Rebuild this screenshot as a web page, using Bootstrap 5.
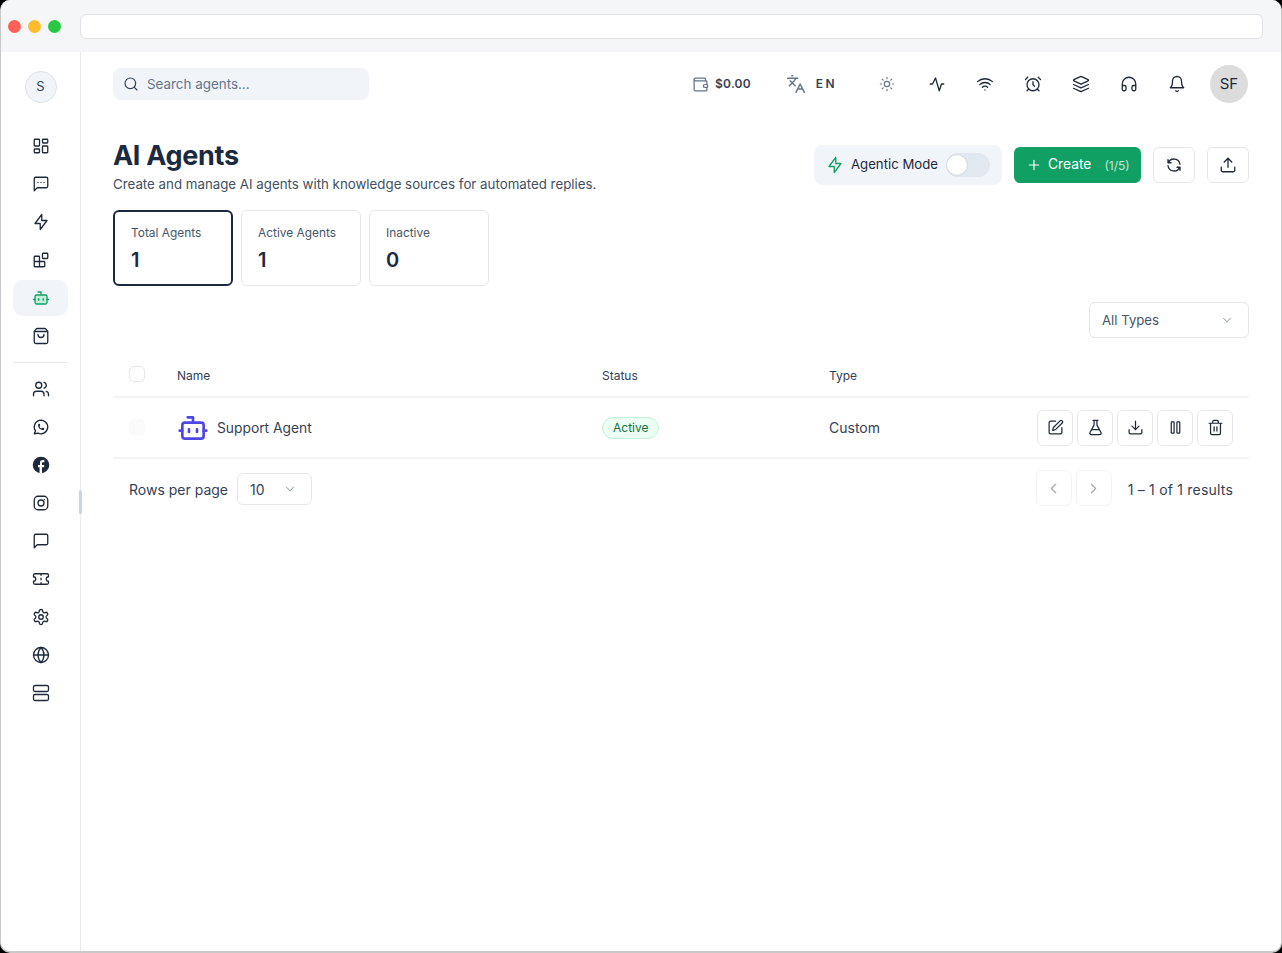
<!DOCTYPE html>
<html lang="en">
<head>
  <meta charset="UTF-8">
  <meta name="viewport" content="width=device-width, initial-scale=1">
  <title>AI Agents</title>
  <link href="https://cdn.jsdelivr.net/npm/bootstrap@5.3.0/dist/css/bootstrap.min.css" rel="stylesheet">
  <style>
    html, body { height: 100%; }
    body { background: #000; overflow: hidden; font-family: Inter, "Liberation Sans", sans-serif; color: #1e293b; }
    .ico { width: 18px; height: 18px; fill: none; stroke: currentColor; stroke-width: 1.75; stroke-linecap: round; stroke-linejoin: round; flex: none; }
    .app-window { height: 953px; background: #fff; border-radius: 10px; overflow: hidden; border: solid #c9c9c9; border-width: 0 1px 2px 1px; }
    .chrome-bar { height: 52px; background: #f5f6f8; margin: 0 -1px; padding: 14px 19px 13px 8px; gap: 8px; }
    .dot { width: 13px; height: 13px; border-radius: 50%; margin-left: -1px; }
    .dot-r { background: #fe5f57; margin-left: 0; }
    .dot-y { background: #febc2e; }
    .dot-g { background: #28c840; }
    .url-box { flex: 1; height: 25px; background: #fff; border: 1px solid #dfe2e6; border-radius: 6px; margin-left: 11px; }
    .side-rail { width: 80px; flex: none; border-right: 1px solid #e9ebee; padding: 19px 12px 0; position: relative; }
    .org-chip { width: 32px; height: 32px; border-radius: 50%; background: #f1f5f9; border: 1px solid #dde3ea; font-size: 13px; color: #334155; margin: 0 auto 25px; }
    .rail-item { height: 36px; margin-bottom: 2px; border-radius: 10px; color: #1e293b; }
    .rail-item.is-on { background: #f1f5f9; color: #10a064; }
    .rail-sep { border-top: 1px solid #e5e7eb; margin: 8px 0 8px; }
    .rail-grip { position: absolute; right: -2px; top: 438px; width: 3px; height: 24px; background: #cbd5e1; border-radius: 2px; }
    .main-pane { padding: 0 32px; min-width: 0; }
    .top-strip { height: 64px; }
    .search-box { width: 256px; height: 32px; background: #f1f5f9; border-radius: 8px; padding: 0 10px; gap: 8px; font-size: 13.4px; color: #64748b; }
    .search-box .ico { width: 16px; height: 16px; color: #334155; }
    .wallet-ico { width: 17px; height: 17px; margin-right: 6px; }
    .wallet-text { font-size: 12px; font-weight: 600; color: #334155; letter-spacing: .2px; }
    .lang-ico { width: 20px; height: 20px; margin-left: 35px; }
    .lang-text { font-size: 12px; font-weight: 600; color: #334155; letter-spacing: 2.4px; margin-left: 10px; }
    .top-slot { width: 48px; color: #1e293b; }
    .sun-slot { margin-left: 26px; margin-right: 2px; }
    .sun-slot .ico { width: 16px; height: 16px; }
    .muted-ico { color: #64748b; }
    .user-chip { width: 38px; height: 38px; border-radius: 50%; background: #dcdcdc; font-size: 15px; color: #1e293b; margin-left: 9px; margin-right: 1px; }
    .page-title { font-size: 27px; line-height: 30px; font-weight: 700; color: #1b2a41; letter-spacing: -.3px; margin: 1px 0 3px; }
    .page-sub { font-size: 13.3px; line-height: 20px; color: #434f60; margin: 0; }
    .head-actions { margin-top: 5px; gap: 12px; }
    .agentic-box { height: 40px; width: 188px; background: #f1f5f9; border-radius: 8px; padding: 0 12px; gap: 7px; font-size: 13.2px; color: #1e293b; white-space: nowrap; }
    .toggle-track { width: 44px; height: 24px; background: #e2e8f0; border-radius: 12px; position: relative; margin-left: auto; }
    .toggle-track::after { content: ""; position: absolute; left: 1px; top: 2px; width: 20px; height: 20px; border-radius: 50%; background: #fff; box-shadow: 0 0 2px rgba(0,0,0,.2); }
    .green-ico { color: #10a064; }
    .create-btn { width: 127px; height: 36px; background: #10a064; color: #fff; border: 0; border-radius: 6px; font-size: 13.8px; padding: 0 12px 1px; gap: 6px; }
    .create-btn:hover { background: #10a064; color: #fff; }
    .create-btn .ico { width: 16px; height: 16px; }
    .create-btn .count { font-size: 12px; margin-left: 7px; padding-top: 2px; opacity: .75; }
    .square-btn { width: 42px; height: 36px; padding: 0; background: #fff; border: 1px solid #e5e7eb; border-radius: 6px; color: #1e293b; }
    .square-btn .big-ico { width: 18px; height: 18px; }
    .stat-tile { width: 120px; height: 76px; border: 1px solid #e5e7eb; border-radius: 6px; padding: 14px 16px; }
    .stat-tile.is-on { border: 2px solid #1b2a41; padding: 13px 16px; }
    .stat-label { font-size: 11.9px; line-height: 16px; color: #475569; }
    .stat-num { font-size: 20px; line-height: 26px; font-weight: 600; color: #1b2a41; margin-top: 6px; }
    .pick-btn { height: 36px; border: 1px solid #e5e7eb; border-radius: 6px; background: #fff; font-size: 13.2px; color: #475569; padding: 0 14px 0 12px; }
    .pick-btn .ico { width: 14px; height: 14px; color: #94a3b8; }
    .pick-label { padding-top: 2px; }
    .pick-types { width: 160px; }
    .pick-rows { width: 75px; height: 32px; font-size: 14px; color: #334155; }
    .agent-grid { margin: 16px 0 0; table-layout: fixed; width: 100%; }
    .agent-grid th { font-size: 12px; font-weight: 400; color: #334155; height: 43px; padding: 2px 0 0 16px; border-bottom: 2px solid #f3f4f6; }
    .agent-grid td { height: 61px; padding: 0 0 0 16px; font-size: 14px; color: #334155; border-bottom: 2px solid #f3f4f6; }
    .tick-box { width: 16px; height: 16px; border: 1px solid #e5e7eb; border-radius: 5px; background: #fff; margin-top: -4px; }
    .tick-box.faint { border-color: #f8f9fa; background: #fbfbfc; margin-top: -2px; }
    .name-cell { font-size: 13.8px; }
    .name-text { padding-top: 2px; }
    .bot-mark { width: 32px; height: 32px; color: #4f46e5; stroke-width: 2; }
    .state-pill { font-size: 12px; line-height: 20px; padding: 0 10px; border-radius: 11px; background: #ecfdf3; border: 1px solid #c7f0d8; color: #166f3f; }
    .act-btn { width: 36px; height: 36px; padding: 0; background: #fff; border: 1px solid #e5e7eb; border-radius: 6px; color: #1e293b; }
    .act-btn .ico { width: 17px; height: 17px; }
    .off-btn { border-color: #f3f4f6; color: #a3abb6; }
    .foot-strip { padding: 11px 16px 0; font-size: 14px; color: #334155; }
    .rows-group { margin-top: 2px; gap: 9px; }
    .range-text { margin-left: 12px; padding-top: 3px; letter-spacing: .2px; }
  </style>
</head>
<body>
  <!-- icon sprite -->
  <svg width="0" height="0" class="position-absolute">
    <symbol id="i-dash" viewBox="0 0 24 24"><rect x="3" y="3" width="7" height="9" rx="1"/><rect x="14" y="3" width="7" height="5" rx="1"/><rect x="14" y="12" width="7" height="9" rx="1"/><rect x="3" y="16" width="7" height="5" rx="1"/></symbol>
    <symbol id="i-chat" viewBox="0 0 24 24"><path d="M21 15a2 2 0 0 1-2 2H7l-4 4V5a2 2 0 0 1 2-2h14a2 2 0 0 1 2 2z"/><path d="M8 10h.01M12 10h.01M16 10h.01"/></symbol>
    <symbol id="i-msg" viewBox="0 0 24 24"><path d="M21 15a2 2 0 0 1-2 2H7l-4 4V5a2 2 0 0 1 2-2h14a2 2 0 0 1 2 2z"/></symbol>
    <symbol id="i-bolt" viewBox="0 0 24 24"><path d="M13 2v8h7l-9 12v-8H4l9-12"/></symbol>
    <symbol id="i-blocks" viewBox="0 0 24 24"><rect x="14" y="3" width="7" height="7" rx="1"/><path d="M10 21V8a1 1 0 0 0-1-1H4a1 1 0 0 0-1 1v12a1 1 0 0 0 1 1h12a1 1 0 0 0 1-1v-5a1 1 0 0 0-1-1H3"/></symbol>
    <symbol id="i-bot" viewBox="0 0 24 24"><path d="M12 8V4H8"/><rect x="4" y="8" width="16" height="12" rx="2"/><path d="M2 14h2M20 14h2M15 13v2M9 13v2"/></symbol>
    <symbol id="i-bot-on" viewBox="0 0 24 24"><path d="M12 8V4H8"/><rect x="4" y="8" width="16" height="12" rx="2" fill="#c4f0da"/><path d="M2 14h2M20 14h2M15 13v2M9 13v2"/></symbol>
    <symbol id="i-bag" viewBox="0 0 24 24"><path d="M16 10a4 4 0 0 1-8 0"/><path d="M3.100 6h17.800"/><path d="M3.400 5.500a2 2 0 0 0-.4 1.200V20a2 2 0 0 0 2 2h14a2 2 0 0 0 2-2V6.700a2 2 0 0 0-.4-1.200l-2-2.700A2 2 0 0 0 17 2H7a2 2 0 0 0-1.600.8z"/></symbol>
    <symbol id="i-users" viewBox="0 0 24 24"><path d="M16 21v-2a4 4 0 0 0-4-4H6a4 4 0 0 0-4 4v2"/><circle cx="9" cy="7" r="4"/><path d="M22 21v-2a4 4 0 0 0-3-3.870M16 3.130a4 4 0 0 1 0 7.750"/></symbol>
    <symbol id="i-wa" viewBox="0 0 24 24"><path d="M3 21l1.650-3.800a9 9 0 1 1 3.400 2.900L3 21"/><path d="M9 10a.5.5 0 0 0 1 0V9a.5.5 0 0 0-1 0v1a5 5 0 0 0 5 5h1a.5.5 0 0 0 0-1h-1a.5.5 0 0 0 0 1"/></symbol>
    <symbol id="i-fb" viewBox="0 0 24 24"><circle cx="12" cy="12" r="11" fill="currentColor" stroke="none"/><path fill="#fff" stroke="none" d="M16.500 8.300h-1.900c-.9 0-1.300.5-1.300 1.400V12h3.100l-.5 3h-2.600v8h-3.200v-8H8v-3h2.600V9.300c0-2.500 1.500-3.900 3.700-3.900.9 0 1.700.1 2.200.2z"/></symbol>
    <symbol id="i-ig" viewBox="0 0 24 24"><rect x="3" y="3" width="18" height="18" rx="5"/><circle cx="12" cy="12" r="4"/><path d="M16.500 7.500h.01"/></symbol>
    <symbol id="i-ticket" viewBox="0 0 24 24"><path d="M2 9a3 3 0 0 1 0 6v2a2 2 0 0 0 2 2h16a2 2 0 0 0 2-2v-2a3 3 0 0 1 0-6V7a2 2 0 0 0-2-2H4a2 2 0 0 0-2 2Z"/><path d="M12 5v2M12 17v2M12 11v2"/></symbol>
    <symbol id="i-gear" viewBox="0 0 24 24"><path d="M12.220 2h-.44a2 2 0 0 0-2 2v.18a2 2 0 0 1-1 1.730l-.43.25a2 2 0 0 1-2 0l-.15-.08a2 2 0 0 0-2.730.73l-.22.38a2 2 0 0 0 .73 2.730l.15.1a2 2 0 0 1 1 1.720v.51a2 2 0 0 1-1 1.740l-.15.09a2 2 0 0 0-.73 2.730l.22.38a2 2 0 0 0 2.730.73l.15-.08a2 2 0 0 1 2 0l.43.25a2 2 0 0 1 1 1.730V20a2 2 0 0 0 2 2h.44a2 2 0 0 0 2-2v-.18a2 2 0 0 1 1-1.730l.43-.25a2 2 0 0 1 2 0l.15.08a2 2 0 0 0 2.730-.73l.22-.39a2 2 0 0 0-.73-2.730l-.15-.08a2 2 0 0 1-1-1.740v-.5a2 2 0 0 1 1-1.740l.15-.09a2 2 0 0 0 .73-2.730l-.22-.38a2 2 0 0 0-2.730-.73l-.15.08a2 2 0 0 1-2 0l-.43-.25a2 2 0 0 1-1-1.730V4a2 2 0 0 0-2-2z"/><circle cx="12" cy="12" r="3"/></symbol>
    <symbol id="i-globe" viewBox="0 0 24 24"><circle cx="12" cy="12" r="10"/><path d="M12 2a14.500 14.500 0 0 0 0 20 14.500 14.500 0 0 0 0-20M2 12h20"/></symbol>
    <symbol id="i-server" viewBox="0 0 24 24"><rect x="2" y="2" width="20" height="8" rx="2"/><rect x="2" y="14" width="20" height="8" rx="2"/></symbol>
    <symbol id="i-search" viewBox="0 0 24 24"><circle cx="11" cy="11" r="8"/><path d="m21 21-4.300-4.300"/></symbol>
    <symbol id="i-wallet" viewBox="0 0 24 24"><path d="M19 7V4a1 1 0 0 0-1-1H5a2 2 0 0 0 0 4h15a1 1 0 0 1 1 1v4h-3a2 2 0 0 0 0 4h3a1 1 0 0 0 1-1v-2a1 1 0 0 0-1-1"/><path d="M3 5v14a2 2 0 0 0 2 2h15a1 1 0 0 0 1-1v-4"/></symbol>
    <symbol id="i-lang" viewBox="0 0 24 24"><path d="m5 8 6 6M4 14l6-6 2-3M2 5h12M7 2h1M22 22l-5-10-5 10M14 18h6"/></symbol>
    <symbol id="i-sun" viewBox="0 0 24 24"><circle cx="12" cy="12" r="4"/><path d="M12 2v2M12 20v2M4.900 4.900l1.400 1.400M17.700 17.700l1.400 1.400M2 12h2M20 12h2M6.300 17.700l-1.400 1.400M19.100 4.900l-1.400 1.400"/></symbol>
    <symbol id="i-pulse" viewBox="0 0 24 24"><path d="M3 12h3l4-8 5 17 3-9h3"/></symbol>
    <symbol id="i-wifi" viewBox="0 0 24 24"><path d="M12 20h.01M2 8.820a15 15 0 0 1 20 0M5 12.860a10 10 0 0 1 14 0M8.500 16.430a5 5 0 0 1 7 0"/></symbol>
    <symbol id="i-alarm" viewBox="0 0 24 24"><circle cx="12" cy="13" r="8"/><path d="M12 9v4l2 2M5 3 2 6M22 6l-3-3M6.380 18.700 4 21M17.640 18.670 20 21"/></symbol>
    <symbol id="i-layers" viewBox="0 0 24 24"><path d="M12.830 2.180a2 2 0 0 0-1.660 0L2.600 6.080a1 1 0 0 0 0 1.830l8.580 3.910a2 2 0 0 0 1.660 0l8.580-3.900a1 1 0 0 0 0-1.830Z"/><path d="m22 17.650-9.170 4.160a2 2 0 0 1-1.660 0L2 17.650M22 12.650l-9.170 4.160a2 2 0 0 1-1.660 0L2 12.650"/></symbol>
    <symbol id="i-phones" viewBox="0 0 24 24"><path d="M3 14h3a2 2 0 0 1 2 2v3a2 2 0 0 1-2 2H5a2 2 0 0 1-2-2v-7a9 9 0 0 1 18 0v7a2 2 0 0 1-2 2h-1a2 2 0 0 1-2-2v-3a2 2 0 0 1 2-2h3"/></symbol>
    <symbol id="i-bell" viewBox="0 0 24 24"><path d="M6 8a6 6 0 0 1 12 0c0 7 3 9 3 9H3s3-2 3-9M10.300 21a1.940 1.940 0 0 0 3.400 0"/></symbol>
    <symbol id="i-plus" viewBox="0 0 24 24"><path d="M5 12h14M12 5v14"/></symbol>
    <symbol id="i-refresh" viewBox="0 0 24 24"><path d="M20 11a8.100 8.100 0 0 0-15.500-2m-.5-4v4h4M4 13a8.100 8.100 0 0 0 15.500 2m.5 4v-4h-4"/></symbol>
    <symbol id="i-upload" viewBox="0 0 24 24"><path d="M21 15v4a2 2 0 0 1-2 2H5a2 2 0 0 1-2-2v-4M17 8l-5-5-5 5M12 3v12"/></symbol>
    <symbol id="i-edit" viewBox="0 0 24 24"><path d="M12 3H5a2 2 0 0 0-2 2v14a2 2 0 0 0 2 2h14a2 2 0 0 0 2-2v-7"/><path d="M18.380 2.630a1 1 0 0 1 3 3l-9.010 9.010a2 2 0 0 1-.85.51l-2.870.84a.5.5 0 0 1-.62-.62l.84-2.870a2 2 0 0 1 .51-.85z"/></symbol>
    <symbol id="i-flask" viewBox="0 0 24 24"><path d="M14 2v6a2 2 0 0 0 .25.96l5.510 10.080A2 2 0 0 1 18 22H6a2 2 0 0 1-1.750-2.960l5.510-10.080A2 2 0 0 0 10 8V2M6.450 15h11.100M8.500 2h7"/></symbol>
    <symbol id="i-down" viewBox="0 0 24 24"><path d="M21 15v4a2 2 0 0 1-2 2H5a2 2 0 0 1-2-2v-4M7 10l5 5 5-5M12 15V3"/></symbol>
    <symbol id="i-pause" viewBox="0 0 24 24"><rect x="6" y="4" width="4" height="16" rx="1"/><rect x="14" y="4" width="4" height="16" rx="1"/></symbol>
    <symbol id="i-trash" viewBox="0 0 24 24"><path d="M3 6h18M19 6v14c0 1-1 2-2 2H7c-1 0-2-1-2-2V6M8 6V4c0-1 1-2 2-2h4c1 0 2 1 2 2v2M10 11v6M14 11v6"/></symbol>
    <symbol id="i-chev" viewBox="0 0 24 24"><path d="m6 9 6 6 6-6"/></symbol>
    <symbol id="i-left" viewBox="0 0 24 24"><path d="m15 18-6-6 6-6"/></symbol>
    <symbol id="i-right" viewBox="0 0 24 24"><path d="m9 18 6-6-6-6"/></symbol>
  </svg>

  <div class="app-window d-flex flex-column">
    <div class="chrome-bar d-flex align-items-center">
      <span class="dot dot-r"></span><span class="dot dot-y"></span><span class="dot dot-g"></span>
      <div class="url-box"></div>
    </div>

    <div class="d-flex flex-grow-1">
      <aside class="side-rail">
        <div class="org-chip d-flex align-items-center justify-content-center">S</div>
        <div class="rail-item d-flex align-items-center justify-content-center"><svg class="ico"><use href="#i-dash"/></svg></div>
        <div class="rail-item d-flex align-items-center justify-content-center"><svg class="ico"><use href="#i-chat"/></svg></div>
        <div class="rail-item d-flex align-items-center justify-content-center"><svg class="ico"><use href="#i-bolt"/></svg></div>
        <div class="rail-item d-flex align-items-center justify-content-center"><svg class="ico"><use href="#i-blocks"/></svg></div>
        <div class="rail-item is-on d-flex align-items-center justify-content-center"><svg class="ico"><use href="#i-bot-on"/></svg></div>
        <div class="rail-item d-flex align-items-center justify-content-center"><svg class="ico"><use href="#i-bag"/></svg></div>
        <div class="rail-sep"></div>
        <div class="rail-item d-flex align-items-center justify-content-center"><svg class="ico"><use href="#i-users"/></svg></div>
        <div class="rail-item d-flex align-items-center justify-content-center"><svg class="ico"><use href="#i-wa"/></svg></div>
        <div class="rail-item d-flex align-items-center justify-content-center"><svg class="ico"><use href="#i-fb"/></svg></div>
        <div class="rail-item d-flex align-items-center justify-content-center"><svg class="ico"><use href="#i-ig"/></svg></div>
        <div class="rail-item d-flex align-items-center justify-content-center"><svg class="ico"><use href="#i-msg"/></svg></div>
        <div class="rail-item d-flex align-items-center justify-content-center"><svg class="ico"><use href="#i-ticket"/></svg></div>
        <div class="rail-item d-flex align-items-center justify-content-center"><svg class="ico"><use href="#i-gear"/></svg></div>
        <div class="rail-item d-flex align-items-center justify-content-center"><svg class="ico"><use href="#i-globe"/></svg></div>
        <div class="rail-item d-flex align-items-center justify-content-center"><svg class="ico"><use href="#i-server"/></svg></div>
        <div class="rail-grip"></div>
      </aside>

      <main class="main-pane flex-grow-1">
        <div class="top-strip d-flex align-items-center">
          <div class="search-box d-flex align-items-center"><svg class="ico"><use href="#i-search"/></svg>Search agents...</div>
          <div class="ms-auto d-flex align-items-center">
            <svg class="ico muted-ico wallet-ico"><use href="#i-wallet"/></svg>
            <span class="wallet-text">$0.00</span>
            <svg class="ico muted-ico lang-ico"><use href="#i-lang"/></svg>
            <span class="lang-text">EN</span>
            <div class="top-slot sun-slot d-flex justify-content-center muted-ico"><svg class="ico"><use href="#i-sun"/></svg></div>
            <div class="top-slot d-flex justify-content-center"><svg class="ico"><use href="#i-pulse"/></svg></div>
            <div class="top-slot d-flex justify-content-center"><svg class="ico"><use href="#i-wifi"/></svg></div>
            <div class="top-slot d-flex justify-content-center"><svg class="ico"><use href="#i-alarm"/></svg></div>
            <div class="top-slot d-flex justify-content-center"><svg class="ico"><use href="#i-layers"/></svg></div>
            <div class="top-slot d-flex justify-content-center"><svg class="ico"><use href="#i-phones"/></svg></div>
            <div class="top-slot d-flex justify-content-center"><svg class="ico"><use href="#i-bell"/></svg></div>
            <div class="user-chip d-flex align-items-center justify-content-center">SF</div>
          </div>
        </div>

        <div class="d-flex justify-content-between align-items-start mt-4">
          <div>
            <h1 class="page-title">AI Agents</h1>
            <p class="page-sub">Create and manage AI agents with knowledge sources for automated replies.</p>
          </div>
          <div class="head-actions d-flex align-items-center">
            <div class="agentic-box d-flex align-items-center"><svg class="ico green-ico"><use href="#i-bolt"/></svg>Agentic Mode<span class="toggle-track"></span></div>
            <button class="btn create-btn d-flex align-items-center"><svg class="ico"><use href="#i-plus"/></svg>Create<span class="count">(1/5)</span></button>
            <button class="btn square-btn d-flex align-items-center justify-content-center"><svg class="ico big-ico"><use href="#i-refresh"/></svg></button>
            <button class="btn square-btn d-flex align-items-center justify-content-center"><svg class="ico"><use href="#i-upload"/></svg></button>
          </div>
        </div>

        <div class="d-flex gap-2 mt-3">
          <div class="stat-tile is-on"><div class="stat-label">Total Agents</div><div class="stat-num">1</div></div>
          <div class="stat-tile"><div class="stat-label">Active Agents</div><div class="stat-num">1</div></div>
          <div class="stat-tile"><div class="stat-label">Inactive</div><div class="stat-num">0</div></div>
        </div>

        <div class="d-flex justify-content-end mt-3">
          <button class="btn pick-btn pick-types d-flex align-items-center justify-content-between"><span class="pick-label">All Types</span><svg class="ico"><use href="#i-chev"/></svg></button>
        </div>

        <table class="agent-grid">
          <colgroup><col style="width:48px"><col style="width:425px"><col style="width:227px"><col style="width:140px"><col></colgroup>
          <thead>
            <tr>
              <th><div class="tick-box"></div></th>
              <th>Name</th>
              <th>Status</th>
              <th>Type</th>
              <th></th>
            </tr>
          </thead>
          <tbody>
            <tr>
              <td><div class="tick-box faint"></div></td>
              <td><div class="name-cell d-flex align-items-center gap-2"><svg class="ico bot-mark"><use href="#i-bot"/></svg><span class="name-text">Support Agent</span></div></td>
              <td><span class="state-pill d-inline-block">Active</span></td>
              <td>Custom</td>
              <td class="pe-3">
                <div class="d-flex justify-content-end gap-1">
                  <button class="btn act-btn d-flex align-items-center justify-content-center"><svg class="ico"><use href="#i-edit"/></svg></button>
                  <button class="btn act-btn d-flex align-items-center justify-content-center"><svg class="ico"><use href="#i-flask"/></svg></button>
                  <button class="btn act-btn d-flex align-items-center justify-content-center"><svg class="ico"><use href="#i-down"/></svg></button>
                  <button class="btn act-btn d-flex align-items-center justify-content-center"><svg class="ico"><use href="#i-pause"/></svg></button>
                  <button class="btn act-btn d-flex align-items-center justify-content-center"><svg class="ico"><use href="#i-trash"/></svg></button>
                </div>
              </td>
            </tr>
          </tbody>
        </table>

        <div class="foot-strip d-flex justify-content-between align-items-center">
          <div class="rows-group d-flex align-items-center">
            <span>Rows per page</span>
            <button class="btn pick-btn pick-rows d-flex align-items-center justify-content-between">10<svg class="ico"><use href="#i-chev"/></svg></button>
          </div>
          <div class="d-flex align-items-center gap-1">
            <button class="btn act-btn off-btn d-flex align-items-center justify-content-center"><svg class="ico"><use href="#i-left"/></svg></button>
            <button class="btn act-btn off-btn d-flex align-items-center justify-content-center"><svg class="ico"><use href="#i-right"/></svg></button>
            <span class="range-text">1 – 1 of 1 results</span>
          </div>
        </div>
      </main>
    </div>
  </div>
  <script src="https://cdn.jsdelivr.net/npm/bootstrap@5.3.0/dist/js/bootstrap.bundle.min.js"></script>
</body>
</html>
